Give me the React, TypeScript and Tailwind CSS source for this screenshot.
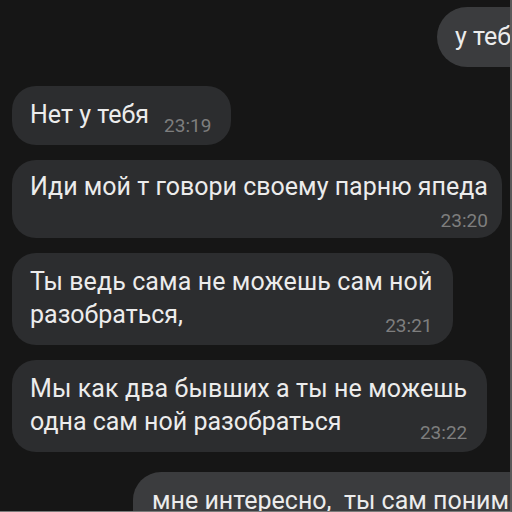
import React from 'react';

type Msg = {
    lines: string[];
    time: string;
    timeOwnLine?: boolean;
};

const incoming: Msg[] = [
    { lines: ['Нет у тебя'], time: '23:19' },
    { lines: ['Иди мой т говори своему парню япеда'], time: '23:20', timeOwnLine: true },
    { lines: ['Ты ведь сама не можешь сам ной', 'разобраться,'], time: '23:21' },
    { lines: ['Мы как два бывших а ты не можешь', 'одна сам ной разобраться'], time: '23:22' },
];

function Time({ value }: { value: string }) {
    return (
        <span className="shrink-0 text-[19px] leading-[18px] text-[#7e7e7e]">
            {value}
        </span>
    );
}

function Incoming({ msg }: { msg: Msg }) {
    const head = msg.lines.slice(0, -1);
    const last = msg.lines[msg.lines.length - 1];
    return (
        <div className="flex">
            <div className={`bg-[#2c2d2f] rounded-[24px] pl-[18px] pt-[12px] pb-[10px] ${msg.timeOwnLine ? 'pr-[14px]' : 'pr-[20px]'}`}>
                {head.map((line, i) => (
                    <div key={i} className="leading-[33px] tracking-[0.1px]">{line}</div>
                ))}
                {msg.timeOwnLine ? (
                    <>
                        <div className="leading-[33px] -mt-[2px]">{last}</div>
                        <div className="flex justify-end mt-[9px] -mb-[2px]">
                            <Time value={msg.time} />
                        </div>
                    </>
                ) : (
                    <div className="flex items-end justify-between gap-[15px]">
                        <span className="leading-[33px] mb-1">{last}</span>
                        <Time value={msg.time} />
                    </div>
                )}
            </div>
        </div>
    );
}

export default function App() {
    return (
        <div
            className="w-[512px] h-[512px] overflow-hidden bg-[#161616] border-r-2 border-b border-r-[#5a5a5a] border-b-[#7a7a7a] text-[25px] text-[#ececec]"
            style={{ fontFamily: 'Roboto, "Noto Sans", sans-serif' }}
        >
            <div className="flex flex-col pt-[7px] pl-[12px]">
                {/* outgoing, cut off at the right */}
                <div className="pl-[425px] whitespace-nowrap">
                    <div className="w-[200px] bg-[#3b3c3e] rounded-l-[30px] pl-[18px] pt-[13px] pb-[14px] leading-[33px]">
                        у тебя
                    </div>
                </div>

                <div className="flex flex-col gap-[15px] mt-[19px]">
                    {incoming.map((m, i) => (
                        <Incoming key={i} msg={m} />
                    ))}
                </div>

                <div className="pl-[121px] mt-[20px] whitespace-nowrap">
                    <div className="w-[500px] bg-[#3b3c3e] rounded-tl-[28px] pl-[19px] pt-[12px] pb-[12px] leading-[33px]">
                        мне интересно,&nbsp; ты сам понимаешь
                    </div>
                </div>
            </div>
        </div>
    );
}
